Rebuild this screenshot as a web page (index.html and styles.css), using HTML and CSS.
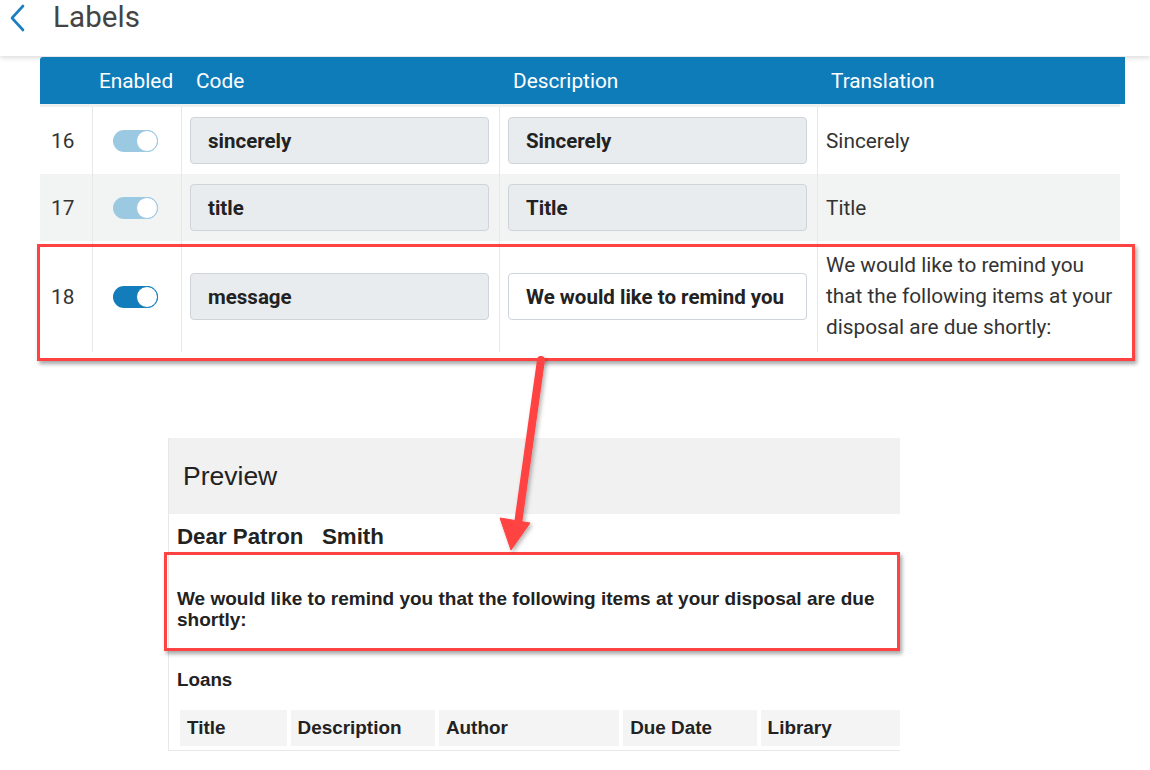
FILE: index.html
```html
<!DOCTYPE html>
<html>
<head>
<meta charset="utf-8">
<link rel="stylesheet" href="styles.css">
</head>
<body>
<div class="page">
  <header class="topbar">
    <svg class="back" width="18" height="28" viewBox="0 0 18 28"><path d="M15 2 L4 14 L15 26" fill="none" stroke="#1a7fc1" stroke-width="2.6" stroke-linecap="round" stroke-linejoin="round"/></svg>
    <h1 class="title">Labels</h1>
  </header>

  <section class="table">
    <div class="thead">
      <div class="th c-num"></div>
      <div class="th c-en">Enabled</div>
      <div class="th c-code">Code</div>
      <div class="th c-desc">Description</div>
      <div class="th c-tr">Translation</div>
    </div>
    <div class="tbody">
      <div class="row">
        <div class="td c-num">16</div>
        <div class="td c-en sep"><span class="toggle dim"><span class="knob"></span></span></div>
        <div class="td c-code sep"><div class="input">sincerely</div></div>
        <div class="td c-desc sep"><div class="input">Sincerely</div></div>
        <div class="td c-tr sep">Sincerely</div>
      </div>
      <div class="row alt">
        <div class="td c-num">17</div>
        <div class="td c-en sep"><span class="toggle dim"><span class="knob"></span></span></div>
        <div class="td c-code sep"><div class="input">title</div></div>
        <div class="td c-desc sep"><div class="input">Title</div></div>
        <div class="td c-tr sep">Title</div>
      </div>
      <div class="row tall">
        <div class="td c-num">18</div>
        <div class="td c-en sep"><span class="toggle on"><span class="knob"></span></span></div>
        <div class="td c-code sep"><div class="input">message</div></div>
        <div class="td c-desc sep"><div class="input white">We would like to remind you</div></div>
        <div class="td c-tr sep text">We would like to remind you that the following items at your disposal are due shortly:</div>
      </div>
    </div>
  </section>

  <section class="preview">
    <div class="preview-head">Preview</div>
    <div class="preview-body">
      <div class="dear">Dear Patron&nbsp;&nbsp; Smith</div>
      <p class="msg">We would like to remind you that the following items at your disposal are due shortly:</p>
      <div class="loans">Loans</div>
      <div class="loan-table">
        <div class="lc w1">Title</div>
        <div class="lc w2">Description</div>
        <div class="lc w3">Author</div>
        <div class="lc w4">Due Date</div>
        <div class="lc w5">Library</div>
      </div>
    </div>
  </section>

  <div class="mark mark-row"></div>
  <div class="mark mark-msg"></div>
  <svg class="arrow" width="80" height="220" viewBox="480 340 80 220">
    <defs>
      <filter id="sh" x="-50%" y="-20%" width="200%" height="140%">
        <feDropShadow dx="2" dy="2" stdDeviation="2" flood-color="#000" flood-opacity="0.3"/>
      </filter>
    </defs>
    <g filter="url(#sh)" fill="#ff4343" stroke="#ff4343">
      <line x1="541" y1="360" x2="518" y2="524" stroke-width="8" stroke-linecap="round"/>
      <polygon points="500,518 530,523 511,550" stroke-width="1" stroke-linejoin="round"/>
    </g>
  </svg>
</div>
</body>
</html>
```

FILE: styles.css
```css
* { box-sizing: border-box; }
html, body { margin: 0; padding: 0; background: #fff; }
body { font-family: Roboto, "Liberation Sans", Arial, sans-serif; color: #333; }
.page { position: relative; width: 1150px; height: 770px; overflow: hidden; }

.topbar {
  height: 56px;
  display: flex;
  align-items: center;
  padding-left: 8px;
  padding-bottom: 22px;
  background: #fff;
  box-shadow: 0 2px 5px rgba(0,0,0,0.14);
  position: relative;
  z-index: 1;
}
.back { display: block; margin-right: 27px; margin-top: 2px; }
.title { margin: 0; font-size: 29.5px; font-weight: 400; color: #444; letter-spacing: 0.1px; }

.table { margin: 1px 0 0 40px; width: 1085px; position: relative; z-index: 2; }
.thead {
  display: grid;
  grid-template-columns: 52px 89px 318px 318px 308px;
  height: 47px;
  background: #0f7cba;
  color: #fff;
  border-top-left-radius: 3px;
  align-items: center;
  font-size: 20.8px;
}
.th.c-en { padding-left: 7px; }
.th.c-code { padding-left: 15px; }
.th.c-desc { padding-left: 14px; }
.th.c-tr { padding-left: 14px; }

.tbody { width: 1080px; border-top: 3px solid #eef0f0; }
.row {
  display: grid;
  grid-template-columns: 52px 89px 318px 318px 303px;
  height: 67px;
  font-size: 20.8px;
  color: #333;
}
.row.alt { background: #f2f3f3; }
.row.tall { height: 111px; }
.td { display: flex; align-items: center; }
.td.sep { border-left: 1px solid #e7e9e9; }
.td.c-num { padding-left: 11px; }
.td.c-en { justify-content: center; }
.td.c-code, .td.c-desc { padding-left: 8px; padding-right: 10px; }
.td.c-tr { padding-left: 8px; }
.td.text { line-height: 31px; padding-right: 4px; }

.input {
  width: 299px;
  height: 47px;
  display: flex;
  align-items: center;
  padding-left: 17px;
  background: #e9ecef;
  border: 1px solid #ced4da;
  border-radius: 4px;
  font-weight: 700;
  color: #222;
  font-size: 20.5px;
  white-space: nowrap;
  overflow: hidden;
}
.input.white { background: #fff; }

.toggle {
  width: 45px;
  height: 22px;
  border-radius: 11px;
  display: flex;
  justify-content: flex-end;
  margin-right: 3px;
}
.toggle.dim { background: #9cc9e2; }
.toggle.on { background: #137cba; }
.knob {
  width: 22px;
  height: 22px;
  border-radius: 50%;
  background: #fff;
  border: 1px solid #137cba;
}
.toggle.dim .knob { border-color: #9cc9e2; }

.preview {
  margin: 86px 0 0 168px;
  width: 732px;
  height: 313px;
  border-left: 1px solid #e8e8e8;
  border-bottom: 1px solid #e8e8e8;
  font-family: "Liberation Sans", Arial, sans-serif;
  color: #222;
}
.preview-head {
  height: 76px;
  background: #f1f1f1;
  display: flex;
  align-items: center;
  padding-left: 14px;
  padding-top: 1px;
  font-size: 26.5px;
}
.preview-body { padding-left: 8px; }
.dear { font-weight: 700; font-size: 22.3px; margin-top: 10px; line-height: 26px; }
.msg { margin: 38px 0 0; font-weight: 700; font-size: 19px; line-height: 21px; padding-right: 10px; }
.loans { margin-top: 39px; font-weight: 700; font-size: 18.8px; line-height: 22px; }
.loan-table { display: flex; gap: 4px; margin-top: 19px; margin-left: 3px; }
.lc {
  height: 36px;
  background: #f4f4f4;
  display: flex;
  align-items: center;
  padding-left: 7px;
  font-weight: 700;
  font-size: 18.9px;
}
.w1 { width: 107px; }
.w2 { width: 145px; }
.w3 { width: 181px; }
.w4 { width: 134px; }
.w5 { width: 140px; }

.mark {
  position: absolute;
  border: 3px solid #ff4343;
  box-shadow: 2px 3px 4px rgba(0,0,0,0.35);
  z-index: 3;
}
.mark-row { left: 37px; top: 244px; width: 1098px; height: 117px; }
.mark-msg { left: 164px; top: 552px; width: 736px; height: 99px; }
.arrow { position: absolute; left: 480px; top: 340px; z-index: 4; }
```
